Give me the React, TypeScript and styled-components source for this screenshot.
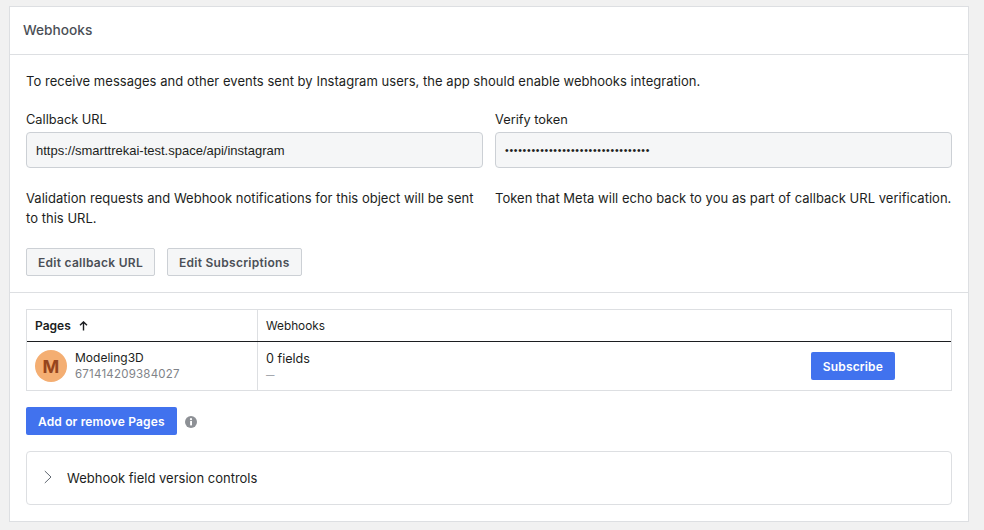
import React from 'react';
import styled, { createGlobalStyle } from 'styled-components';

const GlobalStyle = createGlobalStyle`
  html, body {
    margin: 0;
    padding: 0;
    height: 530px;
    overflow: hidden;
    background: #f1f1f1;
    font-family: Inter, "Liberation Sans", sans-serif;
    color: #1c1e21;
  }
  * { box-sizing: border-box; }
`;

const Page = styled.div`
  padding: 6px 15px 0 9px;
`;

const Card = styled.section`
  width: 960px;
  height: 516px;
  background: #fff;
  border: 1px solid #dddfe2;
`;

const CardHeader = styled.header`
  height: 48px;
  padding: 0 13px 1px;
  display: flex;
  align-items: center;
  border-bottom: 1px solid #dddfe2;
  font-size: 13.7px;
  font-weight: 500;
  color: #4b4f56;
`;

const Settings = styled.div`
  height: 238px;
  padding: 17px 16px 0;
  border-bottom: 1px solid #dddfe2;
`;

const Intro = styled.p`
  margin: 0 0 22px;
  font-size: 13px;
  line-height: 18px;
  letter-spacing: 0.03px;
  color: #1c1e21;
`;

const FieldGrid = styled.div`
  display: grid;
  grid-template-columns: 457px 457px;
  column-gap: 12px;
`;

const Field = styled.div`
  display: flex;
  flex-direction: column;
`;

const Label = styled.label`
  font-size: 12.8px;
  line-height: 16px;
  margin-bottom: 4px;
`;

const ReadOnlyInput = styled.div<{ $secret?: boolean }>`
  height: 36px;
  padding: 0 9px;
  display: flex;
  align-items: center;
  background: #f5f6f7;
  border: 1px solid #ccd0d5;
  border-radius: 4px;
  font-family: "Liberation Sans", Arial, sans-serif;
  font-size: ${p => (p.$secret ? '10.5px' : '13px')};
  letter-spacing: ${p => (p.$secret ? '0.72px' : '0')};
  color: #1c1e21;
`;

const Hint = styled.p`
  margin: 20px 0 0;
  font-size: 13px;
  line-height: 20px;
  letter-spacing: 0.025px;
  height: 40px;
`;

const ButtonRow = styled.div`
  display: flex;
  gap: 12px;
  margin-top: 20px;
`;

const GrayButton = styled.button`
  height: 28px;
  padding: 0 11px;
  background: #f5f6f7;
  border: 1px solid #ccd0d5;
  border-radius: 2px;
  font-family: inherit;
  font-size: 12px;
  font-weight: 600;
  letter-spacing: 0.28px;
  color: #4b4f56;
`;

const PagesSection = styled.div`
  padding: 16px 16px 0;
`;

const Table = styled.div`
  border: 1px solid #dddfe2;
`;

const HeadRow = styled.div`
  display: grid;
  grid-template-columns: 230px 1fr;
  height: 32px;
  border-bottom: 1px solid #1c1e21;
`;

const HeadCell = styled.div<{ $bold?: boolean; $divider?: boolean }>`
  display: flex;
  align-items: center;
  gap: 8px;
  padding: 0 8px;
  font-size: ${p => (p.$bold ? '12px' : '11.8px')};
  font-weight: ${p => (p.$bold ? 600 : 400)};
  border-left: ${p => (p.$divider ? '1px solid #dddfe2' : 'none')};
`;

const BodyRow = styled.div`
  display: grid;
  grid-template-columns: 230px 1fr;
  height: 48px;
`;

const PageCell = styled.div`
  display: flex;
  align-items: center;
  gap: 8px;
  padding: 0 8px;
`;

const Avatar = styled.div`
  width: 32px;
  height: 32px;
  border-radius: 50%;
  background: #f4ae72;
  color: #96451d;
  font-size: 18px;
  font-weight: 700;
  display: flex;
  align-items: center;
  justify-content: center;
`;

const PageName = styled.div`
  font-size: 12px;
  line-height: 16px;
`;

const PageId = styled.div`
  margin-top: 1px;
  font-size: 11.5px;
  line-height: 15px;
  color: #7f8388;
  letter-spacing: 0.22px;
`;

const WebhookCell = styled.div`
  display: flex;
  align-items: center;
  justify-content: space-between;
  padding: 0 56px 0 8px;
  border-left: 1px solid #dddfe2;
`;

const FieldCount = styled.div`
  font-size: 12.6px;
  line-height: 16px;
`;

const Dash = styled.div`
  margin-top: 1px;
  font-size: 8.5px;
  line-height: 14px;
  color: #90949c;
`;

const BlueButton = styled.button`
  height: 28px;
  padding: 0 12px;
  background: #4172ee;
  border: none;
  border-radius: 2px;
  font-family: inherit;
  font-size: 12px;
  font-weight: 600;
  letter-spacing: 0.15px;
  color: #fff;
`;

const AddRow = styled.div`
  display: flex;
  align-items: center;
  gap: 8px;
  margin-top: 16px;
`;

const InfoIcon = styled.svg`
  width: 12px;
  height: 12px;
  margin-top: 1px;
`;

const Accordion = styled.div`
  height: 54px;
  margin-top: 16px;
  padding: 0 17px;
  display: flex;
  align-items: center;
  gap: 15px;
  border: 1px solid #dddfe2;
  border-radius: 4px;
  font-size: 13px;
`;

const Chevron = styled.svg`
  width: 8px;
  height: 14px;
  margin-top: -3px;
`;

const App: React.FC = () => {
  return (
    <Page>
      <GlobalStyle />
      <Card>
        <CardHeader>Webhooks</CardHeader>
        <Settings>
          <Intro>To receive messages and other events sent by Instagram users, the app should enable webhooks integration.</Intro>
          <FieldGrid>
            <Field>
              <Label>Callback URL</Label>
              <ReadOnlyInput>https://smarttrekai-test.space/api/instagram</ReadOnlyInput>
              <Hint>Validation requests and Webhook notifications for this object will be sent to this URL.</Hint>
            </Field>
            <Field>
              <Label>Verify token</Label>
              <ReadOnlyInput $secret>•••••••••••••••••••••••••••••••••</ReadOnlyInput>
              <Hint>Token that Meta will echo back to you as part of callback URL verification.</Hint>
            </Field>
          </FieldGrid>
          <ButtonRow>
            <GrayButton>Edit callback URL</GrayButton>
            <GrayButton>Edit Subscriptions</GrayButton>
          </ButtonRow>
        </Settings>
        <PagesSection>
          <Table>
            <HeadRow>
              <HeadCell $bold>
                Pages
                <svg width="9" height="10" viewBox="0 0 9 10" fill="none" stroke="#1c1e21" strokeWidth="1.4">
                  <path d="M4.5 9.5V1M1 4.2 4.5 .9 8 4.2" />
                </svg>
              </HeadCell>
              <HeadCell $divider>Webhooks</HeadCell>
            </HeadRow>
            <BodyRow>
              <PageCell>
                <Avatar>M</Avatar>
                <div>
                  <PageName>Modeling3D</PageName>
                  <PageId>671414209384027</PageId>
                </div>
              </PageCell>
              <WebhookCell>
                <div>
                  <FieldCount>0 fields</FieldCount>
                  <Dash>—</Dash>
                </div>
                <BlueButton>Subscribe</BlueButton>
              </WebhookCell>
            </BodyRow>
          </Table>
          <AddRow>
            <BlueButton>Add or remove Pages</BlueButton>
            <InfoIcon viewBox="0 0 12 12">
              <circle cx="6" cy="6" r="6" fill="#8d9095" />
              <rect x="5.1" y="5" width="1.9" height="4.4" fill="#fff" />
              <circle cx="6" cy="3.2" r="1.1" fill="#fff" />
            </InfoIcon>
          </AddRow>
          <Accordion>
            <Chevron viewBox="0 0 8 14" fill="none" stroke="#606770" strokeWidth="1">
              <path d="M.8 1 7 7 .8 13" />
            </Chevron>
            Webhook field version controls
          </Accordion>
        </PagesSection>
      </Card>
    </Page>
  );
};

export default App;
